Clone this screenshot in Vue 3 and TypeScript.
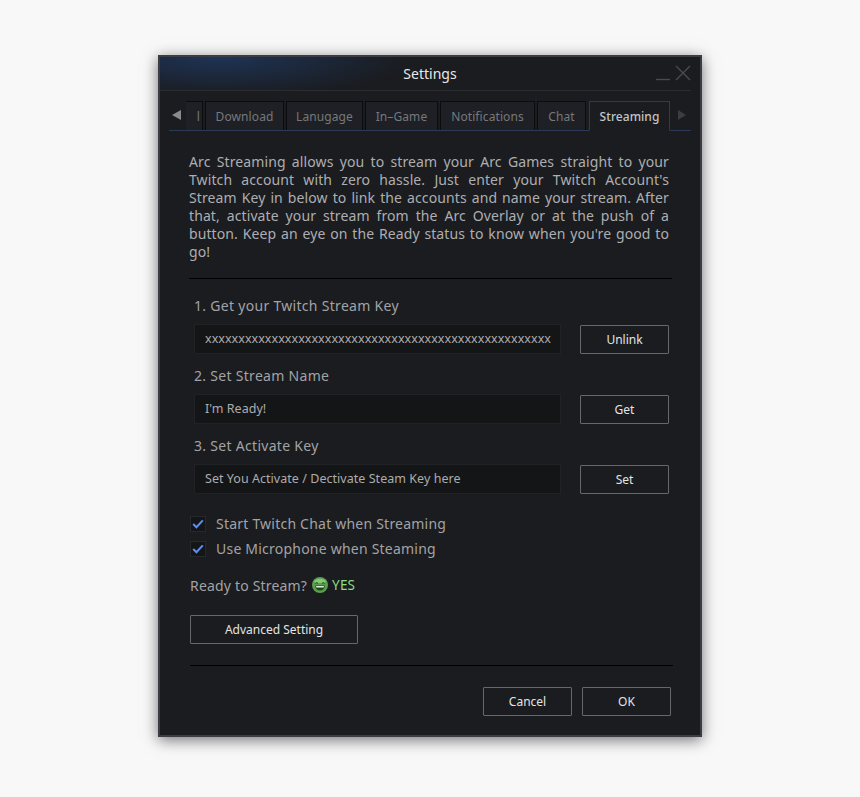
<template>
  <div class="page">
    <div class="dialog">
      <div class="titlebar">
        <div class="title">Settings</div>
        <div class="win-btns">
          <svg width="15" height="16" viewBox="0 0 15 16" fill="none">
            <path d="M1 14.5h14" stroke="#4a4b50" stroke-width="1.4" />
          </svg>
          <svg width="16" height="16" viewBox="0 0 16 16" fill="none">
            <path d="M1 1l14 14M15 1L1 15" stroke="#4a4b50" stroke-width="1.4" />
          </svg>
        </div>
      </div>

      <div class="tabbar">
        <div class="arrow left"></div>
        <div class="tab stub">l</div>
        <div
          v-for="t in tabs"
          :key="t"
          class="tab"
          :class="{ active: t === 'Streaming' }"
        >
          {{ t }}
        </div>
        <div class="arrow right"></div>
      </div>

      <div class="content">
        <p class="intro">
          Arc Streaming allows you to stream your Arc Games straight to your
          Twitch account with zero hassle. Just enter your Twitch Account's
          Stream Key in below to link the accounts and name your stream. After
          that, activate your stream from the Arc Overlay or at the push of a
          button. Keep an eye on the Ready status to know when you're good to
          go!
        </p>
        <div class="divider"></div>

        <div class="steps">
          <div v-for="s in steps" :key="s.label" class="step">
            <div class="step-label">{{ s.label }}</div>
            <div class="step-row">
              <div class="input">{{ s.value }}</div>
              <button class="btn step-btn">{{ s.action }}</button>
            </div>
          </div>
        </div>

        <div class="checks">
          <label v-for="c in checks" :key="c" class="check">
            <span class="box">
              <svg width="12" height="10" viewBox="0 0 12 10" fill="none">
                <path d="M1.2 5l3.2 3.2L10.8 1.4" stroke="#5b8ff0" stroke-width="2" />
              </svg>
            </span>
            {{ c }}
          </label>
        </div>

        <div class="ready">
          Ready to Stream?
          <svg class="smile" width="16" height="16" viewBox="0 0 16 16">
            <circle cx="8" cy="8" r="8" fill="#5a9f4e" />
            <path d="M1.5 5a8 8 0 0 1 13 0q-6.500 2-13 0z" fill="#86c878" />
            <path d="M3.4 6.400q1.300-1.500 2.600 0M10 6.400q1.300-1.500 2.600 0" stroke="#1d4a18" stroke-width="1" fill="none" />
            <path d="M3.200 8.400h9.600q-.4 5-4.800 5t-4.800-5z" fill="#1d4a18" />
            <path d="M4 8.900h8l-.4 1.600H4.400z" fill="#dcf2d5" />
          </svg>
          <span class="yes">YES</span>
        </div>

        <button class="btn advanced">Advanced Setting</button>
        <div class="divider bottom"></div>

        <div class="footer">
          <button class="btn footer-btn">Cancel</button>
          <button class="btn footer-btn">OK</button>
        </div>
      </div>
    </div>
  </div>
</template>

<script setup lang="ts">
const tabs = ["Download", "Lanugage", "In–Game", "Notifications", "Chat", "Streaming"];

const steps = [
  {
    label: "1. Get your Twitch Stream Key",
    value: "x".repeat(52),
    action: "Unlink",
  },
  { label: "2. Set Stream Name", value: "I'm Ready!", action: "Get" },
  {
    label: "3. Set Activate Key",
    value: "Set You Activate / Dectivate Steam Key here",
    action: "Set",
  },
];

const checks = ["Start Twitch Chat when Streaming", "Use Microphone when Steaming"];
</script>

<style>
html,
body {
  margin: 0;
  background: #f8f8f8;
}
</style>

<style scoped>
.page {
  width: 860px;
  height: 797px;
  padding-top: 55px;
  box-sizing: border-box;
  overflow: hidden;
  font-family: "Noto Sans", "Open Sans", sans-serif;
}

.dialog {
  width: 544px;
  height: 682px;
  margin-left: 158px;
  box-sizing: border-box;
  border: 2px solid #3c3d42;
  background: #1a1c20;
  box-shadow: 0 3px 14px rgba(0, 0, 0, 0.55);
}

.titlebar {
  height: 34px;
  position: relative;
  display: flex;
  align-items: center;
  justify-content: center;
  background:
    radial-gradient(ellipse 190px 40px at 60px 0, #1e3355 0%, rgba(30, 51, 85, 0) 100%);
}

.titlebar::after {
  content: "";
  position: absolute;
  left: 0;
  right: 9px;
  bottom: 0;
  height: 1px;
  background: #2c2d31;
}

.title {
  color: #e8e8e8;
  font-size: 14px;
  padding-bottom: 1px;
}

.win-btns {
  position: absolute;
  right: 9px;
  top: 8px;
  display: flex;
  gap: 5px;
}

.tabbar {
  display: flex;
  align-items: stretch;
  height: 30px;
  margin: 10px 9px 0;
  border-bottom: 1px solid #2a3a57;
  box-sizing: border-box;
  position: relative;
}

.tab {
  display: flex;
  align-items: center;
  justify-content: center;
  margin-right: 2px;
  background: #1e2025;
  border: 1px solid #0b0c0e;
  border-bottom: none;
  box-sizing: border-box;
  color: #76787c;
  font-size: 12px;
  letter-spacing: 0.1px;
  height: 29px;
}

.tab:nth-child(3) { width: 79px; }
.tab:nth-child(4) { width: 77px; }
.tab:nth-child(5) { width: 73px; }
.tab:nth-child(6) { width: 95px; }
.tab:nth-child(7) { width: 49px; margin-right: 2px; }

.tab.active {
  width: 81px;
  height: 30px;
  margin: 0;
  margin-left: 1px;
  color: #c4c4c6;
  font-weight: 500;
  background: #1a1c20;
  border: 1px solid #2a3a57;
  border-bottom: 1px solid #1a1c20;
  font-size: 12px;
  letter-spacing: 0.05px;
}

.tab.stub {
  width: 17px;
  margin-right: 2px;
  border-left: none;
  padding-right: 2px;
  justify-content: flex-end;
}

.arrow {
  width: 0;
  height: 0;
  border-top: 5px solid transparent;
  border-bottom: 5px solid transparent;
  align-self: flex-start;
  margin-top: 9px;
}

.arrow.left {
  border-right: 9px solid #8a8b8e;
  margin-left: 3px;
  margin-right: 5px;
}

.arrow.right {
  border-left: 8px solid #3c3d41;
  margin-left: 8px;
}

.content {
  padding: 0 29px;
}

.intro {
  margin: 22px 0 0;
  width: 480px;
  color: #aeaeb0;
  font-size: 14px;
  line-height: 18px;
  text-align: justify;
  letter-spacing: 0.1px;
}

.divider {
  width: 483px;
  height: 1px;
  background: #000;
  margin-top: 17px;
}

.steps {
  margin-top: 17px;
  margin-left: 5px;
}

.step {
  height: 70px;
}

.step-label {
  color: #a3a3a5;
  font-size: 14px;
  letter-spacing: 0.3px;
  line-height: 20px;
}

.step-row {
  display: flex;
  align-items: flex-start;
  margin-top: 8px;
}

.input {
  width: 367px;
  height: 30px;
  box-sizing: border-box;
  background: #141517;
  border: 1px solid #212226;
  color: #acacae;
  font-size: 12.5px;
  line-height: 28px;
  padding-left: 10px;
  overflow: hidden;
  white-space: nowrap;
  letter-spacing: 0.04px;
}

.btn {
  display: block;
  box-sizing: border-box;
  background: #1a1c20;
  border: 1px solid #66676b;
  border-radius: 1px;
  color: #e4e4e4;
  font-family: inherit;
  font-size: 12px;
  padding: 0;
}

.step-btn {
  width: 89px;
  height: 29px;
  margin-left: 19px;
  margin-top: 1px;
}

.checks {
  margin-top: 5px;
  margin-left: 1px;
}

.check {
  display: flex;
  align-items: center;
  height: 25px;
  color: #a3a3a5;
  font-size: 14px;
  letter-spacing: 0.22px;
}

.box {
  width: 16px;
  height: 16px;
  box-sizing: border-box;
  background: #141517;
  border: 1px solid #27282c;
  display: flex;
  align-items: center;
  justify-content: center;
  margin-right: 10px;
}

.ready {
  margin-top: 12px;
  margin-left: 1px;
  height: 24px;
  display: flex;
  align-items: center;
  color: #a3a3a5;
  font-size: 14px;
  letter-spacing: 0.18px;
}

.smile {
  margin: 0 4px 0 5px;
}

.yes {
  color: #8fdc84;
  font-size: 13.5px;
}

.advanced {
  width: 168px;
  height: 29px;
  margin: 18px 0 0 1px;
}

.divider.bottom {
  margin-top: 21px;
  margin-left: 1px;
}

.footer {
  display: flex;
  justify-content: flex-end;
  gap: 10px;
  margin-top: 21px;
  width: 482px;
}

.footer-btn {
  width: 89px;
  height: 29px;
}
</style>
